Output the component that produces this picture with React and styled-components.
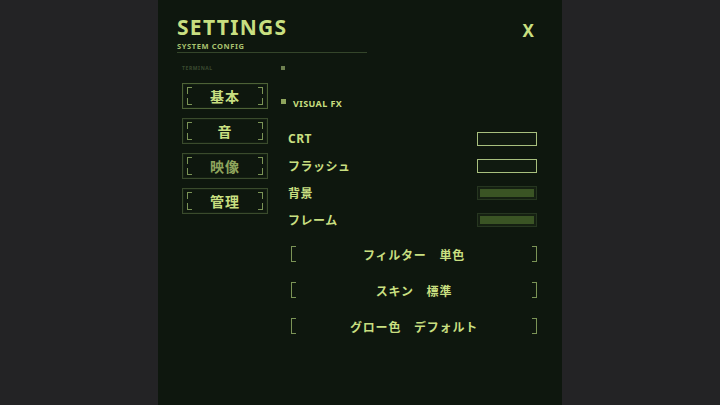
import React from 'react';
import styled, { createGlobalStyle } from 'styled-components';

const GlobalStyle = createGlobalStyle`
  html, body {
    margin: 0;
    padding: 0;
    background: #232325;
    height: 100%;
  }
  body {
    font-family: 'Noto Sans', 'Noto Sans CJK JP', sans-serif;
    color: #c8df80;
  }
`;

const Page = styled.div`
  display: flex;
  justify-content: center;
  height: 405px;
  overflow: hidden;
`;

const Panel = styled.div`
  width: 404px;
  height: 100%;
  background: #0e170e;
  box-sizing: border-box;
  padding: 18px 25px 0 19px;
`;

const Header = styled.div`
  display: flex;
  justify-content: space-between;
  align-items: flex-start;
`;

const TitleBlock = styled.div`
  width: 190px;
  border-bottom: 1px solid #34452a;
  padding-bottom: 1px;
`;

const Title = styled.h1`
  margin: 0 0 6px;
  font-size: 21px;
  line-height: 18px;
  font-weight: 700;
  letter-spacing: 1.3px;
  color: #c8df80;
`;

const Subtitle = styled.div`
  font-size: 7.5px;
  line-height: 9px;
  font-weight: 700;
  letter-spacing: 0.6px;
  color: #a9c26e;
`;

const Close = styled.button`
  margin-top: 1px;
  margin-right: 3px;
  background: none;
  border: none;
  padding: 0;
  font-family: 'Noto Sans', sans-serif;
  font-size: 17px;
  font-weight: 700;
  color: #c8df80;
  cursor: pointer;
`;

const Body = styled.div`
  display: flex;
  margin-top: 12px;
`;

const Nav = styled.nav`
  width: 86px;
  margin-left: 5px;
  display: flex;
  flex-direction: column;
  gap: 9px;
`;

const NavLabel = styled.div`
  font-size: 5px;
  line-height: 6px;
  font-weight: 700;
  letter-spacing: 0.6px;
  color: #3a4a30;
  margin-bottom: 3px;
`;

const NavButton = styled.div`
  position: relative;
  height: 26px;
  box-sizing: border-box;
  border: 1px solid ${(p) => (p.$active ? '#4d6236' : '#3a4b2c')};
  box-shadow: inset 0 0 0 1px #141f12;
  display: flex;
  align-items: center;
  justify-content: center;
  font-family: 'Noto Sans CJK JP', sans-serif;
  font-size: 14px;
  font-weight: 700;
  letter-spacing: 1px;
  color: ${(p) => (p.$dim ? '#8ea45c' : '#c8df80')};
`;

const Corner = styled.span`
  position: absolute;
  width: 4px;
  height: 6px;
  border-color: #7b9456;
  border-style: solid;
  border-width: 0;
  ${(p) => (p.$top ? 'top: 3px; border-top-width: 1px;' : 'bottom: 3px; border-bottom-width: 1px;')}
  ${(p) => (p.$left ? 'left: 4px; border-left-width: 1px;' : 'right: 4px; border-right-width: 1px;')}
`;

const Main = styled.div`
  flex: 1;
  margin-left: 13px;
  display: flex;
  flex-direction: column;
`;

const Marker = styled.div`
  height: 6px;
  display: flex;
  align-items: center;
`;

const Dot = styled.span`
  display: inline-block;
  width: ${(p) => p.$size}px;
  height: ${(p) => p.$size}px;
  background: ${(p) => p.$color};
`;

const SectionHead = styled.div`
  display: flex;
  align-items: center;
  gap: 7px;
  margin-top: 24px;
  height: 12px;
`;

const SectionTitle = styled.span`
  font-size: 9px;
  font-weight: 700;
  letter-spacing: 0.4px;
  color: #c8df80;
  margin-top: 5px;
`;

const Rows = styled.div`
  margin-top: 18px;
  padding-left: 7px;
  display: flex;
  flex-direction: column;
`;

const Row = styled.div`
  display: flex;
  align-items: center;
  justify-content: space-between;
  height: 27px;
`;

const RowLabel = styled.span`
  font-family: 'Noto Sans', 'Noto Sans CJK JP', sans-serif;
  font-size: 12px;
  font-weight: 700;
  letter-spacing: 0.5px;
  color: #c8df80;
`;

const Toggle = styled.div`
  width: 60px;
  height: 14px;
  box-sizing: border-box;
  border: 1px solid ${(p) => (p.$on ? '#a8c07e' : '#263620')};
  background: ${(p) => (p.$on ? '#101a10' : '#3a5424')};
  box-shadow: ${(p) => (p.$on ? 'none' : 'inset 0 0 0 2px #152012')};
`;

const Selects = styled.div`
  margin-top: 13px;
  padding-left: 10px;
  display: flex;
  flex-direction: column;
  gap: 20px;
`;

const Select = styled.div`
  position: relative;
  height: 16px;
  display: flex;
  align-items: center;
  justify-content: center;
  font-family: 'Noto Sans CJK JP', sans-serif;
  font-size: 12px;
  font-weight: 700;
  letter-spacing: 0.8px;
  color: #c8df80;
  white-space: pre;

  &::before,
  &::after {
    content: '';
    position: absolute;
    top: 0;
    bottom: 0;
    width: 4px;
    border: 1px solid #7b9456;
  }
  &::before {
    left: 0;
    border-right: none;
  }
  &::after {
    right: 0;
    border-left: none;
  }
`;

const navItems = [
  { label: '基本', active: true },
  { label: '音' },
  { label: '映像', dim: true },
  { label: '管理' },
];

const toggles = [
  { label: 'CRT', on: true },
  { label: 'フラッシュ', on: true },
  { label: '背景', on: false },
  { label: 'フレーム', on: false },
];

const selects = ['フィルター　単色', 'スキン　標準', 'グロー色　デフォルト'];

export default function App() {
  return (
    <Page>
      <GlobalStyle />
      <Panel>
        <Header>
          <TitleBlock>
            <Title>SETTINGS</Title>
            <Subtitle>SYSTEM CONFIG</Subtitle>
          </TitleBlock>
          <Close>X</Close>
        </Header>
        <Body>
          <Nav>
            <NavLabel>TERMINAL</NavLabel>
            {navItems.map((item) => (
              <NavButton key={item.label} $active={item.active} $dim={item.dim}>
                <Corner $top $left />
                <Corner $top />
                <Corner $left />
                <Corner />
                {item.label}
              </NavButton>
            ))}
          </Nav>
          <Main>
            <Marker>
              <Dot $size={4} $color="#6e8050" />
            </Marker>
            <SectionHead>
              <Dot $size={5} $color="#8ea45c" />
              <SectionTitle>VISUAL FX</SectionTitle>
            </SectionHead>
            <Rows>
              {toggles.map((t) => (
                <Row key={t.label}>
                  <RowLabel>{t.label}</RowLabel>
                  <Toggle $on={t.on} />
                </Row>
              ))}
            </Rows>
            <Selects>
              {selects.map((s) => (
                <Select key={s}>{s}</Select>
              ))}
            </Selects>
          </Main>
        </Body>
      </Panel>
    </Page>
  );
}
